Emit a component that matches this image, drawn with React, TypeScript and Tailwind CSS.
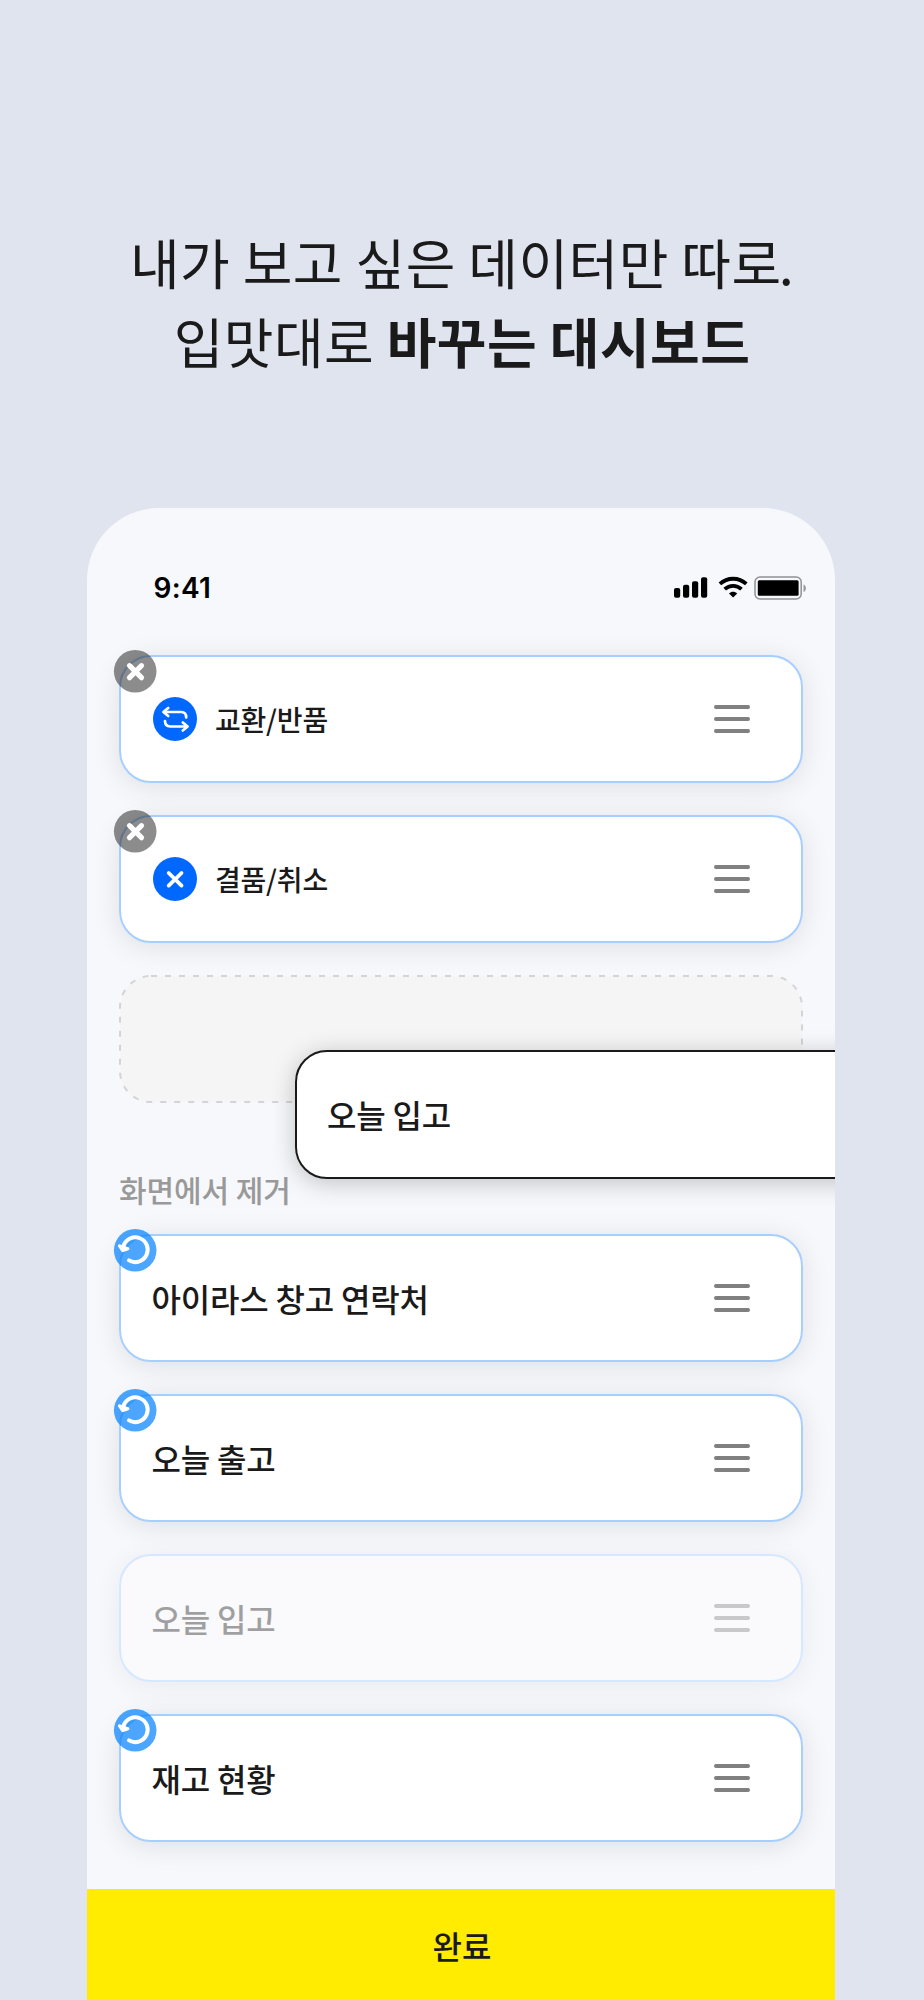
import type { ReactNode } from "react";

type BadgeKind = "remove" | "restore";

function RemoveBadge() {
  return (
    <svg className="absolute -left-[6px] -top-[6px] size-11" viewBox="0 0 44 44" fill="none">
      <circle cx="22.2" cy="22.3" r="21.3" fill="#1a1a1a" fillOpacity="0.5" />
      <path d="M16.5 16.7 28.5 28.7M28.5 16.7 16.5 28.7" stroke="#fff" strokeWidth="5.2" strokeLinecap="round" />
    </svg>
  );
}

function RestoreBadge() {
  return (
    <svg className="absolute -left-[6px] -top-[6px] size-11" viewBox="0 0 44 44" fill="none">
      <circle cx="22.2" cy="22.3" r="21.3" fill="#0080ff" fillOpacity="0.7" />
      <path d="M10.5 17.9A12.4 12.4 0 1 1 16 32.4" stroke="#fff" strokeWidth="4" strokeLinecap="round" />
      <path d="M6.5 17.9 9.8 22.5 14.8 20.7Z" fill="#fff" stroke="#fff" strokeWidth="3.2" strokeLinecap="round" strokeLinejoin="round" />
    </svg>
  );
}

function ExchangeIcon() {
  return (
    <svg className="size-11 shrink-0" viewBox="0 0 44 44" fill="none">
      <circle cx="22" cy="22" r="22" fill="#0068ff" />
      <g stroke="#fff" strokeWidth="2.7" strokeLinecap="round" strokeLinejoin="round">
        <path d="M15.2 11 10.4 15 15.2 19M11 15H28C31.2 15 33.2 17 33.2 20.4" />
        <path d="M29.8 25.5 34.6 29.5 29.8 33.5M34 29.5H17.2C14 29.5 12 27.5 12 24.1" />
      </g>
    </svg>
  );
}

function CancelIcon() {
  return (
    <svg className="size-11 shrink-0" viewBox="0 0 44 44" fill="none">
      <circle cx="22" cy="22" r="22" fill="#0068ff" />
      <path d="M15.7 16 28.5 28.6M28.5 16 15.7 28.6" stroke="#fff" strokeWidth="3.8" strokeLinecap="round" />
    </svg>
  );
}

function Handle() {
  return (
    <div className="mr-[51px] flex w-9 flex-col gap-2">
      <span className="h-1 rounded-full bg-[#808080]" />
      <span className="h-1 rounded-full bg-[#808080]" />
      <span className="h-1 rounded-full bg-[#808080]" />
    </div>
  );
}

function Card({ label, icon, badge, faded }: { label: string; icon?: ReactNode; badge?: BadgeKind; faded?: boolean }) {
  return (
    <div className={`relative rounded-[32px] ${faded ? "shadow-[0_4px_28px_rgba(0,0,0,0.06)]" : "shadow-[0_4px_28px_rgba(0,0,0,0.1)]"}`}>
      <div
        className={`flex h-32 items-center justify-between rounded-[32px] border-2 ${icon ? "pl-8" : "pl-[30.5px]"} ${
          faded ? "border-[#d6e8ff] bg-[#fafafc]" : "border-[#a6ceff] bg-white"
        }`}
      >
        <div className={`flex items-center gap-[18px] ${faded ? "opacity-40" : ""}`}>
          {icon}
          <span
            className={`font-medium text-[#1a1a1a] ${icon ? "text-[28px] leading-10 tracking-[-0.2px]" : "pb-px text-[32px] leading-12 tracking-[-0.2px]"}`}
          >
            {label}
          </span>
        </div>
        <div className={faded ? "opacity-40" : ""}>
          <Handle />
        </div>
      </div>
      {badge === "remove" && <RemoveBadge />}
      {badge === "restore" && <RestoreBadge />}
    </div>
  );
}

function StatusBar() {
  return (
    <div className="flex h-[147px] items-start justify-between pl-[67px] pr-[28px] pt-[61px]">
      <span className="pt-px font-['Inter',sans-serif] text-[28px] font-semibold leading-9 tracking-[0.3px] text-black">9:41</span>
      <svg className="mt-[6px] h-[26px] w-[134px]" viewBox="0 0 134 26" fill="none">
        <g fill="#000">
          <rect x="1" y="13" width="6.2" height="9.8" rx="2" />
          <rect x="10" y="9.7" width="6.2" height="13.1" rx="2" />
          <rect x="19" y="6.3" width="6.2" height="16.5" rx="2" />
          <rect x="28" y="2.3" width="6.2" height="20.5" rx="2" />
        </g>
        <g stroke="#000" strokeWidth="3.8">
          <path d="M46.9 8.9C54.4 2 65.8 2 73.3 8.9" />
          <path d="M51.7 14.1C56.6 9.7 63.6 9.7 68.5 14.1" />
        </g>
        <path d="M56 18.4C58.6 16.2 61.6 16.2 64.2 18.4L60.1 22.6Z" fill="#000" />
        <rect x="82" y="2.1" width="46.2" height="21.8" rx="5" stroke="#8f9093" strokeWidth="1.5" />
        <rect x="84.8" y="5.2" width="40.8" height="15.6" rx="1.5" fill="#000" />
        <path d="M130.5 9.5C133.7 10.3 133.7 16.1 130.5 16.9Z" fill="#98999c" />
      </svg>
    </div>
  );
}

export default function App() {
  return (
    <main className="flex h-[2000px] w-[924px] flex-col items-center overflow-hidden bg-[#e0e4ef] font-['Noto_Sans_CJK_KR',sans-serif] text-[#1a1a1a]">
      <h1 className="h-[508px] pt-[222px] text-center text-[54px] font-normal leading-[79px] tracking-[0.45px]">
        내가 보고 싶은 데이터만 따로<span className="-ml-[3px]">.</span>
        <br />
        입맛대로 <strong className="font-bold">바꾸는 대시보드</strong>
      </h1>
      <section className="relative -ml-[3px] flex w-[748px] flex-1 flex-col overflow-hidden rounded-t-[72px] bg-[#f7f8fc]">
        <StatusBar />
        <div className="flex flex-1 flex-col pl-[32.5px] pr-[31.5px]">
          <div className="flex flex-col gap-8">
            <Card label="교환/반품" icon={<ExchangeIcon />} badge="remove" />
            <Card label="결품/취소" icon={<CancelIcon />} badge="remove" />
            <div className="relative">
              <svg className="block h-32 w-full" viewBox="0 0 684 128" fill="none">
                <rect x="1" y="1" width="682" height="126" rx="31" fill="#f5f5f5" stroke="#d4d4d4" strokeWidth="2" strokeDasharray="6 8" />
              </svg>
              <div className="absolute left-[176px] top-[75px] flex h-[129px] w-[684px] items-center rounded-[32px] border-2 border-[#1a1a1a] bg-white pl-[30px] shadow-[0_4px_24px_rgba(0,0,0,0.22)]">
                <span className="pb-px text-[32px] font-medium leading-12 tracking-[-0.2px]">오늘 입고</span>
              </div>
            </div>
          </div>
          <h2 className="mt-[64px] h-[67px] text-[30px] font-medium leading-[45px] tracking-[-0.1px] text-[#999999]">화면에서 제거</h2>
          <div className="flex flex-col gap-8">
            <Card label="아이라스 창고 연락처" badge="restore" />
            <Card label="오늘 출고" badge="restore" />
            <Card label="오늘 입고" faded />
            <Card label="재고 현황" badge="restore" />
          </div>
        </div>
        <button className="relative h-[111px] w-full shrink-0 bg-[#ffec00] pl-[3px] text-[32px] font-medium">완료</button>
      </section>
    </main>
  );
}
